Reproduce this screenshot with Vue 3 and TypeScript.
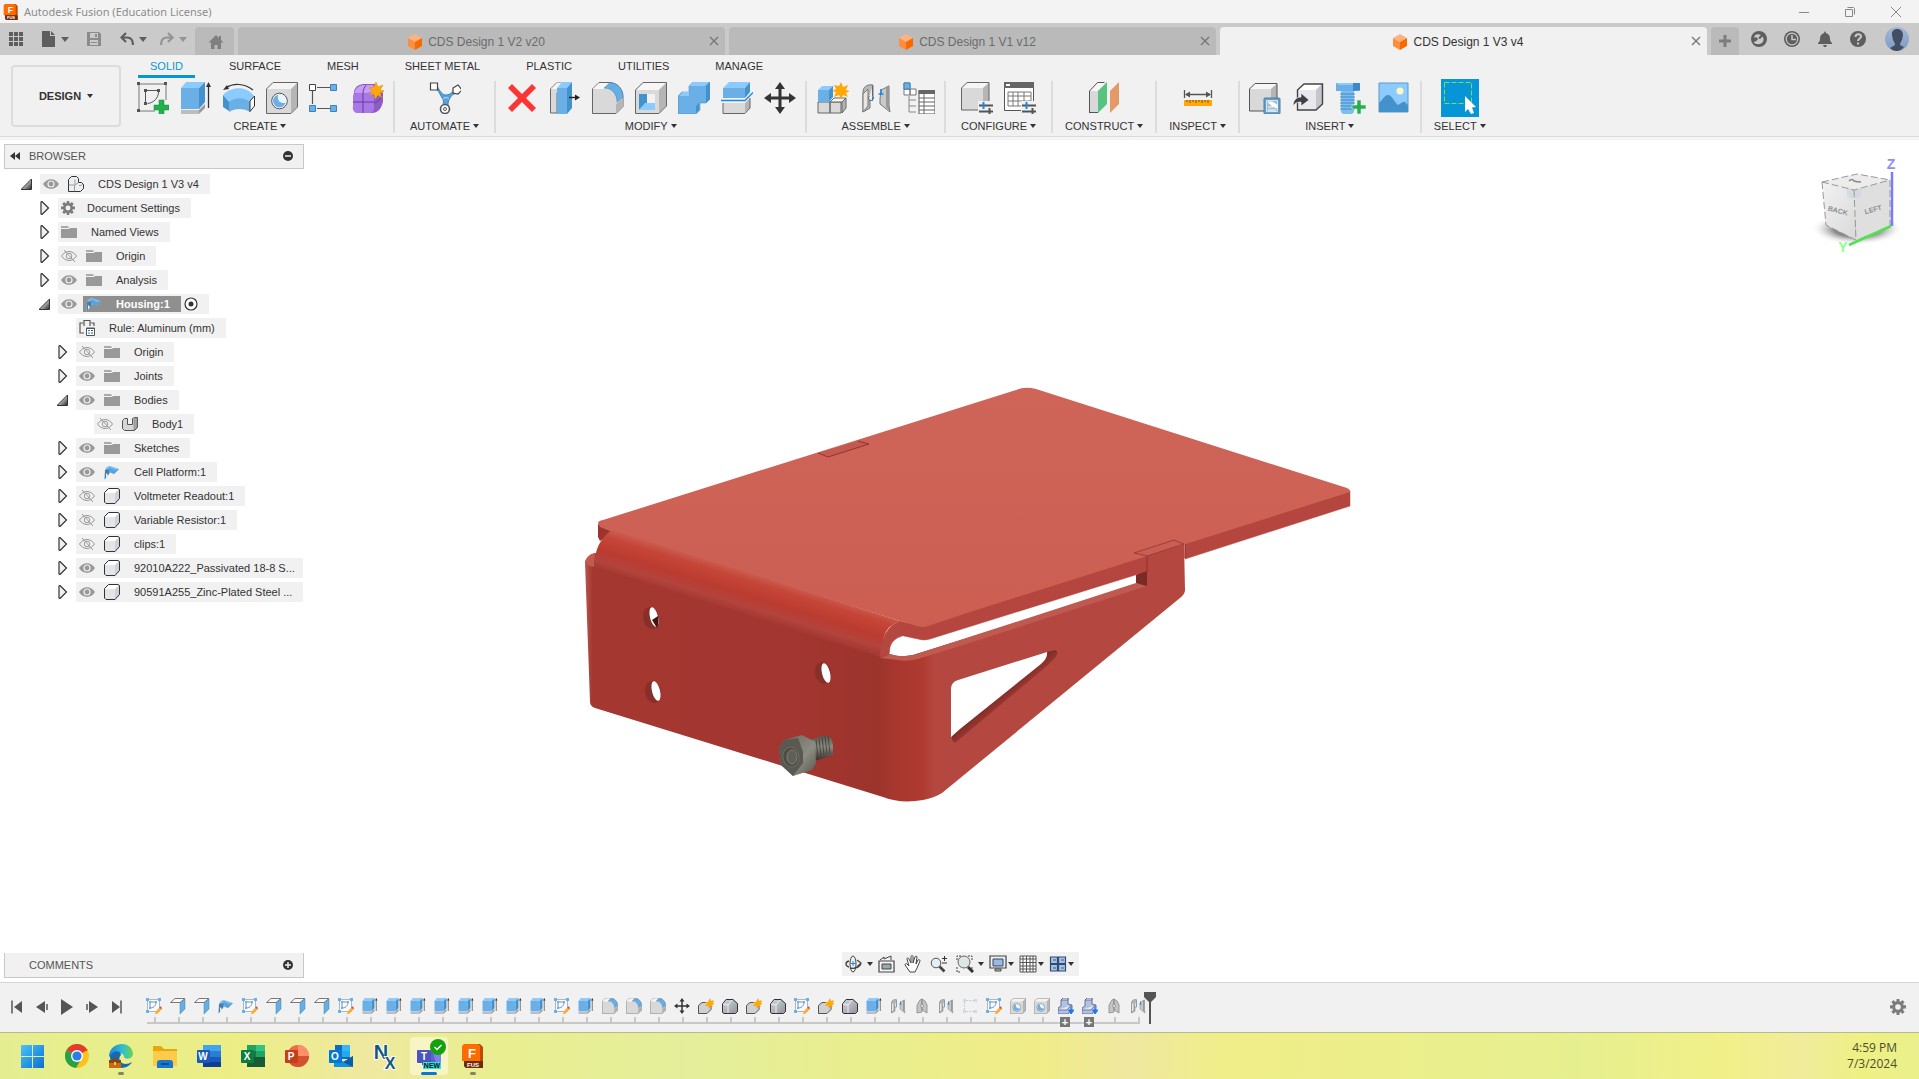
<script setup lang="ts">
import { ref } from 'vue'

interface DocTab { title: string; active: boolean }
interface ToolGroup { label: string; icons: string[]; selected?: boolean; roomy?: boolean }
interface TreeNode {
  label: string
  depth: number
  toggle: 'open' | 'closed' | 'none'
  eye?: 'on' | 'off'
  icon: string
  active?: boolean
}
interface NavTool { name: string; icon: string; menu?: 'near' | 'far' }
interface Glyph { text: string; x: number; y: number; size: number; kind?: string }
interface TaskApp { name: string; running?: boolean; glyphs: Glyph[] }

const docTabs: DocTab[] = [
  { title: 'CDS Design 1 V2 v20', active: false },
  { title: 'CDS Design 1 V1 v12', active: false },
  { title: 'CDS Design 1 V3 v4', active: true },
]

const workspaces = ['SOLID', 'SURFACE', 'MESH', 'SHEET METAL', 'PLASTIC', 'UTILITIES', 'MANAGE']
const activeWorkspace = ref('SOLID')

const groups: ToolGroup[] = [
  { label: 'CREATE', icons: ['sketch', 'extrude', 'revolve', 'hole', 'pattern', 'form'] },
  { label: 'AUTOMATE', icons: ['automate'], roomy: true },
  { label: 'MODIFY', icons: ['delete', 'presspull', 'fillet', 'shell', 'combine', 'split', 'move'] },
  { label: 'ASSEMBLE', icons: ['newcomp', 'joint', 'bom'] },
  { label: 'CONFIGURE', icons: ['config', 'configtable'], roomy: true },
  { label: 'CONSTRUCT', icons: ['plane'] },
  { label: 'INSPECT', icons: ['measure'] },
  { label: 'INSERT', icons: ['derive', 'insertcomp', 'fastener', 'decal'] },
  { label: 'SELECT', icons: ['select'], selected: true },
]

const tree: TreeNode[] = [
  { label: 'CDS Design 1 V3 v4', depth: 0, toggle: 'open', eye: 'on', icon: 'assembly' },
  { label: 'Document Settings', depth: 1, toggle: 'closed', icon: 'gear' },
  { label: 'Named Views', depth: 1, toggle: 'closed', icon: 'folder' },
  { label: 'Origin', depth: 1, toggle: 'closed', eye: 'off', icon: 'folder' },
  { label: 'Analysis', depth: 1, toggle: 'closed', eye: 'on', icon: 'folder' },
  { label: 'Housing:1', depth: 1, toggle: 'open', eye: 'on', icon: 'sheet', active: true },
  { label: 'Rule: Aluminum (mm)', depth: 2, toggle: 'none', icon: 'rule' },
  { label: 'Origin', depth: 2, toggle: 'closed', eye: 'off', icon: 'folder' },
  { label: 'Joints', depth: 2, toggle: 'closed', eye: 'on', icon: 'folder' },
  { label: 'Bodies', depth: 2, toggle: 'open', eye: 'on', icon: 'folder' },
  { label: 'Body1', depth: 3, toggle: 'none', eye: 'off', icon: 'body' },
  { label: 'Sketches', depth: 2, toggle: 'closed', eye: 'on', icon: 'folder' },
  { label: 'Cell Platform:1', depth: 2, toggle: 'closed', eye: 'on', icon: 'sheet' },
  { label: 'Voltmeter Readout:1', depth: 2, toggle: 'closed', eye: 'off', icon: 'component' },
  { label: 'Variable Resistor:1', depth: 2, toggle: 'closed', eye: 'off', icon: 'component' },
  { label: 'clips:1', depth: 2, toggle: 'closed', eye: 'off', icon: 'component' },
  { label: '92010A222_Passivated 18-8 S...', depth: 2, toggle: 'closed', eye: 'on', icon: 'component' },
  { label: '90591A255_Zinc-Plated Steel ...', depth: 2, toggle: 'closed', eye: 'on', icon: 'component' },
]

const navTools: NavTool[] = [
  { name: 'Orbit', icon: 'orbit', menu: 'far' },
  { name: 'Look At', icon: 'lookat' },
  { name: 'Pan', icon: 'hand' },
  { name: 'Zoom', icon: 'zoom' },
  { name: 'Fit', icon: 'fit', menu: 'far' },
  { name: 'Display Settings', icon: 'display', menu: 'near' },
  { name: 'Grid and Snaps', icon: 'grid', menu: 'near' },
  { name: 'Viewports', icon: 'viewports', menu: 'near' },
]

const playback = ['first', 'prev', 'play', 'next', 'last']

const repeat = (name: string, count: number): string[] => Array.from({ length: count }, () => name)
const features: string[] = [
  'tsketch', 'tflange', 'tflange', 'sheet', 'tsketch', ...repeat('tflange', 3), 'tsketch',
  ...repeat('extrude', 8), 'tsketch', 'extrude', ...repeat('fillet', 3), 'move',
  'tcomp', 'tbase', 'tcomp', 'tbase', 'tsketch', 'tcomp', 'tbase', 'extrude',
  'joint', 'trigid', 'joint', 'tpattern', 'tsketch', 'hole', 'hole', 'tinsert', 'tinsert', 'trigid', 'joint',
]

const letter = (text: string): Glyph[] => [{ text, x: 6, y: 16, size: 10 }]
const taskApps: TaskApp[] = [
  { name: 'windows', glyphs: [] },
  { name: 'chrome', glyphs: [] },
  { name: 'edge', running: true, glyphs: [] },
  { name: 'explorer', glyphs: [] },
  { name: 'word', glyphs: letter('W') },
  { name: 'excel', glyphs: letter('X') },
  { name: 'powerpoint', glyphs: letter('P') },
  { name: 'outlook', glyphs: letter('O') },
  { name: 'nx', glyphs: [{ text: 'N', x: 8, y: 15, size: 20, kind: 'nx' }, { text: 'X', x: 17, y: 25, size: 16, kind: 'nx' }] },
  { name: 'teams', running: true, glyphs: [{ text: 'T', x: 7, y: 16, size: 10 }, { text: 'NEW', x: 15, y: 24, size: 7, kind: 'dark' }] },
  { name: 'fusion', running: true, glyphs: [{ text: 'F', x: 11, y: 14, size: 13 }, { text: 'FUS', x: 12, y: 23, size: 6 }] },
]
</script>

<template>
  <div class="app">
    <svg class="defs" aria-hidden="true">
      <defs>
        <linearGradient id="g-tri" x1="0" y1="0" x2="1" y2="1"><stop offset="0.3" stop-color="#eee" /><stop offset="1" stop-color="#222" /></linearGradient>
        <linearGradient id="g-dark" x1="0" y1="0" x2="1" y2="1"><stop offset="0" stop-color="#d4d8e0" /><stop offset="1" stop-color="#8f929b" /></linearGradient>
        <linearGradient id="g-edge" x1="0" y1="0" x2="1" y2="0"><stop offset="0" stop-color="#1c86d8" /><stop offset="0.6" stop-color="#35c1c9" /><stop offset="1" stop-color="#6bd34b" /></linearGradient>
        <linearGradient id="g-win" x1="0" y1="0" x2="1" y2="1"><stop offset="0" stop-color="#4cc3fb" /><stop offset="1" stop-color="#0a6fd0" /></linearGradient>
        <linearGradient id="g-avatar" x1="0" y1="0" x2="0" y2="1"><stop offset="0" stop-color="#a3b7d3" /><stop offset="1" stop-color="#7f9cc6" /></linearGradient>
      </defs>

      <!-- ribbon tools -->
      <symbol id="i-sketch" viewBox="0 0 32 32">
        <path d="M3 2h25M2 3v25M3 29h15M29 3v15" stroke="#777" fill="none" />
        <path d="M0 0h3v3H0zM27 0h3v3h-3zM0 27h3v3H0zM7 7h3v3H7zM20 7h3v3h-3zM7 20h3v3H7z" fill="#555" />
        <path d="M10 8.500h10M8.500 10v10M21.500 10c0 6-5 11-11 11.500" stroke="#555" fill="none" />
        <path d="M22 18h5v5h5v5h-5v5h-5v-5h-5v-5h5z" fill="#22b14c" stroke="#178a38" stroke-width=".5" />
      </symbol>
      <symbol id="i-extrude" viewBox="0 0 32 32">
        <path d="M1 28h18v4H1z" fill="#bdbdbd" /><path d="M19 28l6-6v4l-6 6z" fill="#999" />
        <path d="M1 6h18v21H1z" fill="#6ab0e6" /><path d="M1 6l5-6h19l-6 6z" fill="#8ccbff" /><path d="M19 6l6-6v20l-6 7z" fill="#4492cc" />
        <path d="M28.500 26V3" stroke="#333" stroke-width="1.300" /><path d="M28.500 0l2.500 5h-5z" fill="#333" />
      </symbol>
      <symbol id="i-revolve" viewBox="0 0 32 32">
        <path d="M0 13c9-9 24-9 31 1l-4 6c-6-4-15-4-21 1z" fill="#8ccbff" />
        <path d="M0 13l6 7v9l-6-4z" fill="#4492cc" /><path d="M6 20c6-5 15-5 21 0v10c-6-4-15-4-21 0z" fill="#6ab0e6" />
        <path d="M27 19l4.500-5v10L27 29.500z" fill="#fff" stroke="#333" />
        <path d="M3 6c7-5 18-5 27 2" fill="none" stroke="#333" stroke-width="1.200" /><path d="M0 8l4-5 2 4z" fill="#333" />
      </symbol>
      <symbol id="i-hole" viewBox="0 0 32 32">
        <path d="M1 7l6-6h24l-6 6z" fill="#f4f4f4" /><path d="M25 7l6-6v24l-6 6z" fill="#b5b5b5" /><path d="M1 7h24v24H1z" fill="#d9d9d9" />
        <path d="M.500 7L7 .500h24.500V25L25 31.500H.500z" fill="none" stroke="#666" />
        <circle cx="13.500" cy="19" r="7.800" fill="#fff" stroke="#555" />
        <circle cx="13.500" cy="19" r="6.500" fill="#6ab0e6" /><path d="M12 12.700c-1 6 2 9 8 8.300a6.500 6.500 0 0 0-8-8.300z" fill="#e9f4fd" />
      </symbol>
      <symbol id="i-pattern" viewBox="0 0 32 32">
        <path d="M8 5.500h14M3.500 9v13M8 26.500h14" stroke="#555" stroke-width="1.200" />
        <path d="M.500 2.500h6v6h-6z" fill="#fff" stroke="#444" />
        <path d="M21.500 2.500h6v6h-6zM.500 23.500h6v6h-6zM21.500 23.500h6v6h-6z" fill="#6ab0e6" stroke="#3a84bd" />
      </symbol>
      <symbol id="i-form" viewBox="0 0 32 32">
        <path d="M2 9c2-5 5-7 11-7h10l8 9v9c-2 7-5 11-11 11H7c-4 0-7-3-6-7z" fill="#8f5cc6" />
        <path d="M2 11c2-6 6-8 11-8h8l3 7c-4 1-16 1-22 1z" fill="#c99cf5" />
        <path d="M1 15c0-3 2-4 5-4h11c3 0 5 2 5 5v10c0 3-2 5-5 5H6c-3 0-5-2-5-5z" fill="#a878e6" />
        <path d="M11 11v20M1 20h21M22 21c4-1 7-4 8-8M14 3c-1 2-3 4-3 8" stroke="#6a3ca0" fill="none" />
        <path d="M24 0l2 5 5-2-3 5 5 1-5 2 2 5-4-3-3 4-1-5-5 1 4-4-4-3 5-1z" fill="#ffa808" stroke="#e08d00" stroke-width=".5" />
      </symbol>
      <symbol id="i-automate" viewBox="0 0 32 32">
        <path d="M5 5c6 4 6 9 9 12 1 3 0 5 0 7h5c0-3 0-5 2-8 2-4 5-4 8-6l-3-4c-3 6-6 7-10 7-4-1-6-6-8-9z" fill="#5aa3da" stroke="#3a84bd" />
        <path d="M14 17c2-2 4-2 6 0" stroke="#cfe8fa" fill="none" />
        <path d="M1.500 1h7v7h-7z" fill="#fff" stroke="#444" stroke-width="1.200" />
        <path d="M24 6l5-3 4 5-4 4-5-1z" fill="#fff" stroke="#444" stroke-width="1.200" />
        <circle cx="16" cy="27" r="4.500" fill="#fff" stroke="#555" stroke-width="1.600" /><circle cx="16" cy="27" r="1.500" fill="none" stroke="#555" />
      </symbol>
      <symbol id="i-delete" viewBox="0 0 32 32">
        <path d="M6 2l10 10L26 2l4 4-10 10 10 10-4 4-10-10L6 30l-4-4 10-10L2 6z" fill="#fb3535" />
      </symbol>
      <symbol id="i-presspull" viewBox="0 0 32 32">
        <path d="M1.500 7l6-6h5v4L8 11v20H1.500z" fill="#d9d9d9" stroke="#666" /><path d="M2 7l6-6h5L8 7z" fill="#f5f5f5" />
        <path d="M8 6h10v26H8z" fill="#6ab0e6" /><path d="M8 6l5-6h10l-5 6z" fill="#8ccbff" /><path d="M18 6l5-6v26l-5 6z" fill="#4492cc" />
        <path d="M20 15.500h7" stroke="#222" stroke-width="1.400" /><path d="M26 12.500l5 3-5 3z" fill="#222" />
      </symbol>
      <symbol id="i-fillet" viewBox="0 0 32 32">
        <path d="M.500 31.500V7L7 .500h10c8 0 14 6 14 15v9l-7 7z" fill="#d9d9d9" stroke="#666" />
        <path d="M1 7l6-6h9l-4 6z" fill="#f6f6f6" /><path d="M24 22l7-6v9l-7 6z" fill="#b5b5b5" />
        <path d="M12 6l6-5c8 0 13 6 13 14l-6 5c0-8-5-14-13-14z" fill="#67aee4" stroke="#3a84bd" stroke-width=".5" />
      </symbol>
      <symbol id="i-shell" viewBox="0 0 32 32">
        <path d="M.500 31.500V8L8 .500h23.500V24L24 31.500z" fill="#d9d9d9" /><path d="M1 8l7-7h23l-7 7z" fill="#f6f6f6" /><path d="M24 8l7-7v23l-7 7z" fill="#b5b5b5" />
        <path d="M.500 31.500V8L8 .500h23.500V24L24 31.500z" fill="none" stroke="#666" />
        <path d="M4 12h16v16H4z" fill="#fff" /><path d="M4 12h8v9l-8 7z" fill="#4492cc" /><path d="M4 28l6-7h10v7z" fill="#8ccbff" /><path d="M12 12h8v9h-8z" fill="#f2f2f2" />
      </symbol>
      <symbol id="i-combine" viewBox="0 0 32 32">
        <path d="M0 14l4-4h7V4l4-4h17v17l-4 4h-6v7l-4 4H0z" fill="#6ab0e6" stroke="#3a84bd" stroke-width=".5" />
        <path d="M1 14l4-4h6v4zM11 4l4-4h16l-4 4z" fill="#8ccbff" /><path d="M28 4l4-4v17l-4 4zM18 24l3-3v7l-3 3z" fill="#4492cc" />
      </symbol>
      <symbol id="i-split" viewBox="0 0 32 32">
        <path d="M2 6h22v10H2z" fill="#6ab0e6" /><path d="M2 6l6-6h21l-5 6z" fill="#8ccbff" /><path d="M24 6l5-6v10l-5 6z" fill="#4492cc" />
        <path d="M0 18.500h24l8-8" stroke="#1e88e5" fill="none" stroke-width="1.300" />
        <path d="M2 21h22v10H2z" fill="#d9d9d9" /><path d="M24 21l5-5v10l-5 5z" fill="#b5b5b5" /><path d="M2 21v10.500h22l5-5.500V16" fill="none" stroke="#666" />
      </symbol>
      <symbol id="i-move" viewBox="0 0 32 32">
        <path d="M16 0l5 7h-3.500v7.500H25V11l7 5-7 5v-3.500h-7.500V25H21l-5 7-5-7h3.500v-7.500H7V21l-7-5 7-5v3.500h7.500V7H11z" fill="#333" />
      </symbol>
      <symbol id="i-newcomp" viewBox="0 0 32 32">
        <path d="M1 20h12v11H1zM13 20h11v11H13z" fill="#d9d9d9" stroke="#666" /><path d="M13 20l4-4h12l-4 4z" fill="#f4f4f4" stroke="#666" /><path d="M25 20l4-4v10l-4 5z" fill="#b5b5b5" stroke="#666" />
        <path d="M1 8h11v12H1z" fill="#6ab0e6" /><path d="M1 8l4-4h12l-5 4z" fill="#8ccbff" /><path d="M12 8l4-4v11l-4 5z" fill="#4492cc" />
        <path d="M24 0l2 5 5-2-2 5 4 1-4 2 2 4-5-2-2 4-2-4-5 2 2-5-4-1 4-2-2-4 5 1z" fill="#ffa808" />
      </symbol>
      <symbol id="i-joint" viewBox="0 0 32 32">
        <path d="M3 10c0-5 4-8 10-7v13l-3 1v9l-7 4z" fill="#b9b9b9" stroke="#777" /><path d="M3 12l5-5v17l-5 6z" fill="#e6e6e6" stroke="#777" />
        <path d="M9.500 14a2.500 2.500 0 1 0 3 0V4" fill="#eee" stroke="#666" />
        <path d="M20 17l1-9 8-4v20l1 6-10-8z" fill="#c9c9c9" stroke="#777" /><path d="M26 5l3-2v25l-3-3z" fill="#999" />
        <path d="M12.500 15v4" stroke="#1e88e5" /><path d="M21 7v6M18.500 12h5" stroke="#1e88e5" stroke-width="1.600" />
      </symbol>
      <symbol id="i-bom" viewBox="0 0 32 32">
        <path d="M1 1h6v6H1zM1 7h6v6H1zM7 7h6v6H7z" fill="#fff" stroke="#777" /><path d="M1 1h6v6H1z" fill="#6ab0e6" stroke="#3a84bd" />
        <path d="M6 14v16M6 18h7M6 24h7M6 30h7" stroke="#888" fill="none" />
        <path d="M16 9h16v23H16z" fill="#fff" stroke="#555" /><path d="M15.500 8h17v4h-17z" fill="#666" />
        <path d="M16 16h16M16 20h16M16 24h16M16 28h16M21 12v20" stroke="#666" />
      </symbol>
      <symbol id="i-config" viewBox="0 0 32 32">
        <path d="M.500 28V6L6 .500h22V22l-6 6z" fill="#d9d9d9" /><path d="M1 6l5-5h21l-5 5z" fill="#f6f6f6" /><path d="M22 6l6-5v21l-6 6z" fill="#b5b5b5" />
        <path d="M.500 28V6L6 .500h22V22l-6 6z" fill="none" stroke="#666" />
        <path d="M17 19h16v13H17z" fill="#f1f1f1" />
        <path d="M18 23.500h14M18 29.500h14" stroke="#555" stroke-width="1.800" /><path d="M22.500 20v7" stroke="#1e88e5" stroke-width="2" /><path d="M28.500 26v6" stroke="#555" stroke-width="2" />
      </symbol>
      <symbol id="i-configtable" viewBox="0 0 32 32">
        <path d="M.500.500h29v28H.500z" fill="#fff" stroke="#555" /><path d="M0 0h30v6H0z" fill="#666" /><path d="M2 2h4v2H2z" fill="#fff" />
        <path d="M4 10h23v14H4zM4 14h23M4 19h23M9 10v14M14 10v14M20 10v14" stroke="#777" fill="none" />
        <path d="M17 19h16v13H17z" fill="#f1f1f1" />
        <path d="M18 23.500h14M18 29.500h14" stroke="#555" stroke-width="1.800" /><path d="M22.500 20v7" stroke="#1e88e5" stroke-width="2" /><path d="M28.500 26v6" stroke="#555" stroke-width="2" />
      </symbol>
      <symbol id="i-plane" viewBox="0 0 32 32">
        <path d="M2 31V9l8-8h8l-8 8v22z" fill="#d9d9d9" /><path d="M2 9l8-8h8l-8 8z" fill="#f6f6f6" /><path d="M1.500 31V9l8-8.500h7M1.500 30.500H10" fill="none" stroke="#555" />
        <path d="M10 9l9-9v22l-9 9z" fill="#58c381" /><path d="M22 9l9-9v22l-9 9z" fill="#e39a66" />
      </symbol>
      <symbol id="i-measure" viewBox="0 0 32 32">
        <path d="M2.500 8v8M29.500 8v8M4 12.500h24" stroke="#555" stroke-width="1.300" /><path d="M3 12.500l5-3v6zM29 12.500l-5-3v6z" fill="#555" />
        <path d="M2 18h28v6H2z" fill="#ffa808" /><path d="M5 18v2M8 18v3M11 18v2M14 18v3M17 18v2M20 18v3M23 18v2M26 18v3" stroke="#775010" />
      </symbol>
      <symbol id="i-derive" viewBox="0 0 32 32">
        <path d="M.500 29V7L6 1.500h22V22l-6 7z" fill="#d9d9d9" /><path d="M1 7l5-5h21l-5 5z" fill="#f6f6f6" /><path d="M22 7l6-5v20l-6 7z" fill="#b5b5b5" />
        <path d="M.500 29V7L6 1.500h22V22l-6 7z" fill="none" stroke="#555" />
        <rect x="15" y="16" width="16" height="16" rx="1" fill="#6f9fc0" stroke="#4a7fa5" /><path d="M17.500 18.500h11v11h-11z" fill="#9cc0d8" stroke="#d5e5ef" />
        <path d="M19 20h4l5 3v3l-5-2zM19 25h5M19 28h8" stroke="#fff" fill="#fff" />
      </symbol>
      <symbol id="i-insertcomp" viewBox="0 0 32 32">
        <path d="M6 28V8l6-6h18v20l-6 6z" fill="#e8e8ee" /><path d="M6 8l6-6h18l-6 6z" fill="#fff" /><path d="M24 8l6-6v20l-6 6z" fill="#c5c5cb" />
        <path d="M5.500 28V8l6.500-6h18.500v20l-6.500 6z" fill="none" stroke="#444" stroke-width="1.400" />
        <path d="M1 24c0-6 4-9 8-9v-4l8 7-8 6v-4c-4 0-6 1-8 4z" fill="#3f4047" stroke="#f1f1f1" stroke-width=".7" />
      </symbol>
      <symbol id="i-fastener" viewBox="0 0 32 32">
        <path d="M1 1h24v8H1z" fill="#6ab0e6" /><path d="M18 1h7v7l-7 1z" fill="#3a8acb" /><path d="M1 1l3 2h14V1z" fill="#8ccbff" />
        <path d="M6 9h13v21l-2 2H8l-2-2z" fill="#7fbdeb" /><path d="M5 12h15M5 15h15M5 18h15M5 21h15M5 24h15M5 27h15" stroke="#3a8acb" stroke-width="1.200" />
        <path d="M22 18h4v5h5v4h-5v5h-4v-5h-5v-4h5z" fill="#22b14c" stroke="#f1f1f1" stroke-width=".6" />
      </symbol>
      <symbol id="i-decal" viewBox="0 0 32 32">
        <path d="M1 1h29v29H1z" fill="#8ccbff" stroke="#5d9ac6" /><circle cx="22" cy="9" r="3.500" fill="#fff7c2" />
        <path d="M1 21c5-5 6-8 9-8 4 0 7 8 10 10 3-1 4-4 7-3l3 3v7H1z" fill="#4492cc" />
      </symbol>
      <symbol id="i-select" viewBox="0 0 38 38">
        <path d="M3.500 3.500h27v21h-27z" fill="none" stroke="#6fe06a" stroke-dasharray="5 2" />
        <path d="M24 17l11 11-4 .5 2 5.500-3 1-3-5-3 3z" fill="#fff" />
      </symbol>

      <!-- tree icons -->
      <symbol id="i-eye-on" viewBox="0 0 16 16"><path d="M0 8c4-6.500 12-6.500 16 0-4 6.500-12 6.500-16 0z" fill="#999" /><circle cx="8" cy="8" r="3.600" fill="#f1f1f1" /><circle cx="8" cy="8" r="2.400" fill="#999" /></symbol>
      <symbol id="i-eye-off" viewBox="0 0 16 16"><path d="M.500 8c4-6 11-6 15 0-4 6-11 6-15 0zM3 2l11 12" fill="none" stroke="#999" /><circle cx="8" cy="8" r="2.800" fill="none" stroke="#999" /></symbol>
      <symbol id="i-folder" viewBox="0 0 16 16"><path d="M0 2h7l1 2H0z" fill="#aaa" /><path d="M0 5h8l1-1h7v10H0z" fill="#999" /></symbol>
      <symbol id="i-gear" viewBox="0 0 16 16"><path fill-rule="evenodd" d="M6.500 0h3v2.200l1.300.5 1.600-1.600 2.200 2.200L13 4.900l.6 1.400H16v3.200h-2.400L13 11l1.600 1.700-2.200 2.200-1.600-1.600-1.300.5V16h-3v-2.200l-1.400-.5-1.600 1.600-2.200-2.200L3 11l-.6-1.500H0V6.300h2.400L3 4.900 1.300 3.300l2.200-2.200 1.600 1.600 1.400-.5zM8 5.200a2.800 2.800 0 1 0 0 5.600 2.800 2.800 0 0 0 0-5.600z" fill="#7c7c7c" /></symbol>
      <symbol id="i-assembly" viewBox="0 0 16 16"><path d="M.500 15.500V3.500l3-3h5l2 2v4h3l2 2v4l-3 3z" fill="#eceff4" stroke="#333" /><path d="M6.500 15.500V9.500l4-3M.500 9h6M7 3.500v5M11 9.500h2l2-1.500" fill="none" stroke="#777" stroke-width=".7" /></symbol>
      <symbol id="i-sheet" viewBox="0 0 16 16"><path d="M1 6c1-3 3-4 5-4l9 3-5 5c-3-3-6 0-8 3l-2 3z" fill="#7cbdf0" /><path d="M5 3l6 3 4-1-5 5-3-1z" fill="#5aa3da" /><path d="M1 6v9l4-5c1-2 0-4 1-5z" fill="#4a7ea8" /><path d="M2 9v5l2-3z" fill="#eee" /></symbol>
      <symbol id="i-rule" viewBox="0 0 16 16"><path d="M4 3H1v10h4M5 6V.500h6V6M12 3h3v3" fill="none" stroke="#555" stroke-width="1.200" /><path d="M7.500 8h8v7.500h-8z" fill="#fff" stroke="#555" /><path d="M9 10.500h2M9 13h2" stroke="#1e88e5" /><path d="M12 10.500h2M12 13h2M7 8.500h9" stroke="#555" /></symbol>
      <symbol id="i-body" viewBox="0 0 16 16"><path d="M.500 4.500l2-2h3v6h5v-6l2-1h3v10l-3 3h-10l-2-2z" fill="#d6d6d6" stroke="#555" /><path d="M12 3l3-1v9l-3 3z" fill="#a8a8a8" stroke="#777" stroke-width=".6" /></symbol>
      <symbol id="i-component" viewBox="0 0 16 16"><path d="M1 5l4-4h10v10l-4 4H1z" fill="#e3e5ea" /><path d="M1 5l4-4h10l-4 4z" fill="#fff" /><path d="M11 5l4-4v10l-4 4z" fill="#cfd2da" /><path d="M.500 14V4.500l4-4h9.500l1.500 1v9l-4.500 5H2z" fill="none" stroke="#333" /></symbol>
      <symbol id="i-open" viewBox="0 0 12 14"><path d="M0 12.500L10.500 2v10.500z" fill="url(#g-tri)" stroke="#333" /></symbol>
      <symbol id="i-closed" viewBox="0 0 12 14"><path d="M2 1l1-.500 6.500 6.500L3 13.500 2 13z" fill="#eef0f2" stroke="#333" stroke-width="1.200" /></symbol>

      <!-- timeline icons -->
      <symbol id="i-tsketch" viewBox="0 0 16 16"><path d="M1.500 1.500h12v12h-12z" fill="#f7f9fb" stroke="#999" stroke-width=".7" /><path d="M4 4h6c0 4-3 6-6 6z" fill="none" stroke="#4a7ea8" stroke-width=".8" /><path d="M0 0h3v3H0zM12 0h3v3h-3zM0 12h3v3H0zM3 3h2v2H3zM9 3h2v2H9zM3 9h2v2H3z" fill="#6ab0e6" /><path d="M9 16l1-3 4-4 2 2-5 5z" fill="#f4b13c" /><path d="M13 10l2-2 1 3z" fill="#e0493c" /></symbol>
      <symbol id="i-tflange" viewBox="0 0 16 16"><path d="M.500 4.500L5 .500h10l-5 4z" fill="#fafafa" stroke="#777" /><path d="M10 5l5-4v10l-5 5z" fill="#67aee4" stroke="#3a84bd" stroke-width=".5" /></symbol>
      <symbol id="i-tcomp" viewBox="0 0 16 16"><path d="M.500 15.500v-8L4 4.500h9v7l-4 4z" fill="#d0d0d0" stroke="#555" /><path d="M12 0l1 3 3-1-1 3 2 1-3 1 1 2-3-1-1 3-1-3-3 0 2-2-2-2 3 0z" fill="#ffa808" /></symbol>
      <symbol id="i-tbase" viewBox="0 0 16 16"><path d="M.500 14.500V6L4 1.500h7l4.500 4v8l-2 2H2z" fill="url(#g-dark)" stroke="#333" /><path d="M6 15V7l4-5M1 6l5 1" fill="none" stroke="#f1f1f1" /></symbol>
      <symbol id="i-trigid" viewBox="0 0 16 16"><path d="M3 15V7l3-5 2-1v13zM8 1l3 2 2 4v8l-5-3z" fill="#c5c5c5" stroke="#888" stroke-width=".8" /><circle cx="8" cy="8" r="1.500" fill="#eee" stroke="#777" stroke-width=".6" /></symbol>
      <symbol id="i-tpattern" viewBox="0 0 16 16"><g opacity=".3"><path d="M2.500 4v8M4 2.500h8M4 13.500h8" stroke="#777" stroke-dasharray="2 1" /><path d="M1 1h3v3H1zM12 1h3v3h-3zM1 12h3v3H1zM12 12h3v3h-3z" fill="#6ab0e6" /></g></symbol>
      <symbol id="i-tinsert" viewBox="0 0 16 16"><path d="M3 2l2-2h5v6l4 1v4l-4 5H0v-6l3-2z" fill="#b4c2e2" stroke="#4a5880" stroke-width=".8" /><path d="M3 2l2-2h5v2zM0 12h9l4-5" fill="#dfe6f5" stroke="#4a5880" stroke-width=".7" /><path d="M13 8v5M10.500 12l2.500 4 3-4z" fill="#1e78e5" stroke="#1e78e5" /></symbol>
      <symbol id="i-first" viewBox="0 0 16 16"><path d="M3 1.500v13" stroke="#555" stroke-width="1.500" /><path d="M13 2v12L5 8z" fill="#555" /></symbol>
      <symbol id="i-prev" viewBox="0 0 16 16"><path d="M11 2v12L2 8z" fill="#555" /><path d="M13 5v6" stroke="#555" stroke-width="1.500" /></symbol>
      <symbol id="i-play" viewBox="0 0 16 16"><path d="M2 0v16l12-8z" fill="#555" /></symbol>
      <symbol id="i-next" viewBox="0 0 16 16"><path d="M5 2v12l9-6z" fill="#555" /><path d="M3 5v6" stroke="#555" stroke-width="1.500" /></symbol>
      <symbol id="i-last" viewBox="0 0 16 16"><path d="M3 2v12l8-6z" fill="#555" /><path d="M12 1.500v13" stroke="#555" stroke-width="1.500" /></symbol>

      <!-- navigation bar icons -->
      <symbol id="i-orbit" viewBox="0 0 18 18"><ellipse cx="8" cy="9" rx="3" ry="8" fill="none" stroke="#444" /><path d="M4 6C0 7 0 11 4 12M12 5l4 3-4 4M5 13c4 1 8 0 11-4" fill="none" stroke="#444" stroke-width="1.300" /><path d="M8 6v5M5.500 8.500h5" stroke="#1e88e5" /></symbol>
      <symbol id="i-lookat" viewBox="0 0 18 18"><path d="M1 6h15v11H1z" fill="#f5f5f5" stroke="#444" stroke-width="1.200" /><path d="M4 9h9v5H4z" fill="#9aa" stroke="#444" /><path d="M2 5l4-3v2l7-3v4" fill="none" stroke="#444" /></symbol>
      <symbol id="i-hand" viewBox="0 0 18 18"><path d="M6 17L1 10c0-1 1-2 2-1l2 2L3 4c0-1 1-2 2 0l2 4V2c0-2 2-2 2 0v6l2-6c0-1 2-1 2 0l-1 7 2-4c1-1 2 0 2 1l-3 7-2 4z" fill="#fff" stroke="#444" /></symbol>
      <symbol id="i-zoom" viewBox="0 0 18 18"><circle cx="6" cy="8" r="4.800" fill="#e5edf5" stroke="#555" /><path d="M9.500 11.500l5 5" stroke="#444" stroke-width="2.600" /><path d="M12 3.500h5M14.500 1v5M12 8h5" stroke="#333" /></symbol>
      <symbol id="i-fit" viewBox="0 0 18 18"><path d="M1 5V1h4M12 1h4v4M1 12v5h4M16 12v5" fill="none" stroke="#444" stroke-dasharray="2 1" /><circle cx="8" cy="7" r="6" fill="#dde6e6" stroke="#666" /><path d="M12 12l5 5" stroke="#333" stroke-width="3" /></symbol>
      <symbol id="i-display" viewBox="0 0 18 18"><path d="M1 1h16v12H1z" fill="#eee" stroke="#444" stroke-width="1.200" /><path d="M4 4h10v7H4z" fill="#9ab9dd" stroke="#2e4a75" /><path d="M6 14h6v2H6z" fill="#ccc" stroke="#444" /></symbol>
      <symbol id="i-grid" viewBox="0 0 18 18"><path d="M1 1h16v16H1zM1 4h16M1 7.500h16M1 11h16M1 14h16M4 1v16M7.500 1v16M11 1v16M14 1v16" fill="#fff" stroke="#555" /></symbol>
      <symbol id="i-viewports" viewBox="0 0 18 18"><path d="M1.500 2h7v6.500h-7zM9.500 2h7v6.500h-7zM1.500 9.500h7V16h-7zM9.500 9.500h7V16h-7z" fill="#a9c0e0" stroke="#2e4a75" stroke-width="1.200" /><path d="M4 5h3M12 5h3M4 13h3M12 13h3" stroke="#5a7fb0" stroke-width="1.500" /></symbol>

      <!-- quick access icons -->
      <symbol id="i-cube" viewBox="0 0 16 16"><path d="M8 0l7 4-7 4-7-4z" fill="#ffb27d" /><path d="M1 4l7 4v8l-7-4z" fill="#ff8d3f" /><path d="M15 4l-7 4v8l7-4z" fill="#f86a00" /></symbol>
      <symbol id="i-apps" viewBox="0 0 16 16"><path d="M1 1h4v4H1zM6 1h4v4H6zM11 1h4v4h-4zM1 6h4v4H1zM6 6h4v4H6zM11 6h4v4h-4zM1 11h4v4H1zM6 11h4v4H6zM11 11h4v4h-4z" fill="#5e5e5e" /></symbol>
      <symbol id="i-file" viewBox="0 0 16 16"><path d="M1 0h8v5h5v11H1z" fill="#5e5e5e" /><path d="M10 0l4 4h-4z" fill="#5e5e5e" /></symbol>
      <symbol id="i-save" viewBox="0 0 16 16"><path fill-rule="evenodd" d="M1 1h12l2 2v12H1zM4 2v5h8V2zM4 9v5h8V9z" fill="#8b8b8b" /><path d="M9 3h2v3H9zM5 11h6v1H5z" fill="#8b8b8b" /></symbol>
      <symbol id="i-undo" viewBox="0 0 16 16"><path d="M7 2L2.500 6.500 7 11M3 6.500h5c4 0 6 3 6 7.500" fill="none" stroke="#5e5e5e" stroke-width="2.200" /></symbol>
      <symbol id="i-redo" viewBox="0 0 16 16"><path d="M9 2l4.500 4.500L9 11M13 6.500H8c-4 0-6 3-6 7.500" fill="none" stroke="#949494" stroke-width="2.200" /></symbol>
      <symbol id="i-home" viewBox="0 0 16 16"><path d="M8 1l3 3V2h2v4l2.500 2.500H13V15H9.500v-4h-3v4H3V8.500H.500z" fill="#7f7f7f" /></symbol>
      <symbol id="i-close" viewBox="0 0 12 12"><path d="M2 2l8 8M10 2l-8 8" stroke="currentColor" stroke-width="1.400" /></symbol>
      <symbol id="i-jobs" viewBox="0 0 16 16"><circle cx="8" cy="8" r="8" fill="#5e5e5e" /><path d="M2.500 11c2 3 8 3 9.500-.5 1-2 .5-4-.5-5L9 8 7.500 6.500 10 4C6 2 3 4 3 7c1-1 3-1 4 1-1 2-3 3-4.500 3z" fill="#cacaca" /><path d="M8 7.500l5-5" stroke="#5e5e5e" stroke-width="1.500" /></symbol>
      <symbol id="i-clock" viewBox="0 0 16 16"><circle cx="8" cy="8" r="8" fill="#5e5e5e" /><circle cx="8" cy="8" r="5.800" fill="none" stroke="#cacaca" stroke-width="1.200" /><path d="M8 4v4.500h4" fill="none" stroke="#cacaca" stroke-width="1.500" /></symbol>
      <symbol id="i-bell" viewBox="0 0 16 16"><path d="M8 0l1 2c3 1 4 3 4 6 0 2 1 3 2 4v1H1v-1c1-1 2-2 2-4 0-3 1-5 4-6zM6 14h4l-1 2H7z" fill="#5e5e5e" /></symbol>
      <symbol id="i-help" viewBox="0 0 16 16"><circle cx="8" cy="8" r="8" fill="#5e5e5e" /><path d="M5.500 6c0-4 5.500-3.500 5.500-.500C11 7.500 8 7.500 8 10M8 11.500v2" fill="none" stroke="#cacaca" stroke-width="2" /></symbol>
      <symbol id="i-avatar" viewBox="0 0 24 24"><circle cx="12" cy="12" r="12" fill="url(#g-avatar)" /><path d="M7 8c-1-8 11-8 11 0l-1 5c-1 2-2 3-2 5l4 2c-4 5-10 5-14 1l5-3c0-2-1-3-2-5z" fill="#414e63" /></symbol>

      <!-- taskbar apps -->
      <symbol id="a-windows" viewBox="0 0 24 24"><path d="M0 1h11v11H0zM12 1h11v11H12zM0 13h11v11H0zM12 13h11v11H12z" fill="url(#g-win)" /></symbol>
      <symbol id="a-chrome" viewBox="0 0 24 24"><circle cx="12" cy="12" r="12" fill="#fcc31e" /><path d="M12 12L1.600 6a12 12 0 0 1 20.800 0z" fill="#e33b2e" /><path d="M12 12L1.600 6A12 12 0 0 0 11 24l5-9z" fill="#26a148" /><path d="M12 6h10.400" stroke="#e33b2e" /><circle cx="12" cy="12" r="6" fill="#fff" /><circle cx="12" cy="12" r="4.600" fill="#2b7de9" /></symbol>
      <symbol id="a-edge" viewBox="0 0 24 24"><path d="M0 12C1-3 23-4 24 10c0 5-8 6-9 3 1-5-10-6-13 1z" fill="url(#g-edge)" /><path d="M1 14C1 6 12 5 12 11c-3 3-2 8 4 9 3 0 5-1 7-2-3 7-19 10-22-4z" fill="#1769b8" /><path d="M0 16h12v8H0z" fill="#c86b12" /><path d="M0 16h12v3H0z" fill="#8a4708" /><path d="M4 14h4v2H4z" fill="none" stroke="#8a4708" /><path d="M5 18h2v3H5z" fill="#f4c069" /></symbol>
      <symbol id="a-explorer" viewBox="0 0 24 24"><path d="M0 2h8l3 3h13v17H0z" fill="#e8a80d" /><path d="M0 7h24v15H0z" fill="#fdcb4c" /><path d="M4 24v-5c0-2 1-3 3-3h10c2 0 3 1 3 3v5z" fill="#1579ce" /><path d="M8 19h8v2H8z" fill="#0a4f94" /></symbol>
      <symbol id="a-word" viewBox="0 0 24 24"><path d="M6 1h18v6H6z" fill="#41a5ee" /><path d="M6 7h18v6H6z" fill="#2b7cd3" /><path d="M6 13h18v5H6z" fill="#185abd" /><path d="M6 18h18v5H6z" fill="#103f91" /><rect y="6" width="13" height="13" rx="1" fill="#185abd" /></symbol>
      <symbol id="a-excel" viewBox="0 0 24 24"><path d="M6 1h18v6H6z" fill="#21a366" /><path d="M15 1h9v6h-9z" fill="#33c481" /><path d="M6 7h18v6H6z" fill="#107c41" /><path d="M6 13h18v10H6z" fill="#185c37" /><path d="M15 7h9v6h-9z" fill="#21a366" /><rect y="6" width="13" height="13" rx="1" fill="#107c41" /></symbol>
      <symbol id="a-powerpoint" viewBox="0 0 24 24"><circle cx="13" cy="12" r="11" fill="#ed6c47" /><path d="M13 1a11 11 0 0 1 11 11H13z" fill="#ff8f6b" /><path d="M2 12h22a11 11 0 0 1-22 0z" fill="#d35230" /><rect y="6" width="13" height="13" rx="1" fill="#c43e1c" /></symbol>
      <symbol id="a-outlook" viewBox="0 0 24 24"><path d="M6 1h15v14H6z" fill="#0f6cbd" /><path d="M13 1h8v6h-8z" fill="#35b8f1" /><path d="M13 7h8v6h-8z" fill="#28a8ea" /><path d="M5 12l10 6 9-6v11H5z" fill="#1490df" /><path d="M14 18l10-6v11z" fill="#0b5ca8" /><rect y="6" width="13" height="13" rx="1" fill="#0078d4" /></symbol>
      <symbol id="a-nx" viewBox="0 0 24 24"></symbol>
      <symbol id="a-teams" viewBox="0 0 24 24" overflow="visible"><path d="M5 7h17v14H5z" fill="#5b62c9" /><path d="M16 9h8v9l-4 4z" fill="#7b83eb" /><rect y="6" width="14" height="13" rx="1" fill="#4b53bc" /><circle cx="21" cy="3" r="8" fill="#13a10e" /><path d="M17.500 3l2.500 2.500L24.500 1" stroke="#fff" stroke-width="1.500" fill="none" /><path d="M6 18h18v7H6z" fill="#2ee0e6" /></symbol>
      <symbol id="a-fusion" viewBox="0 0 24 24"><path d="M3 2l2-2h14l3 3v21H5l-2-2z" fill="#c04a00" /><path d="M1 2l2-2h14l2 2v15H1z" fill="#ff6b00" /><path d="M3 17h19v7H5l-2-2z" fill="#6e2c0c" /></symbol>
    </svg>

    <header class="titlebar">
      <svg class="logo" viewBox="0 0 24 24"><use href="#a-fusion" /><text x="11" y="14" font-size="13">F</text><text x="12" y="23" font-size="6">FUS</text></svg>
      <span class="title">Autodesk Fusion (Education License)</span>
      <div class="window-controls">
        <button type="button" aria-label="Minimize"><svg width="12" height="12" viewBox="0 0 12 12"><path d="M1 6.500h10" stroke="#888" /></svg></button>
        <button type="button" aria-label="Restore"><svg width="12" height="12" viewBox="0 0 12 12"><path d="M1.500 3.500h7v7h-7zM3.500 1.500h6l1 1v6" fill="none" stroke="#888" /></svg></button>
        <button type="button" aria-label="Close"><svg width="12" height="12" viewBox="0 0 12 12"><path d="M1 1l10 10M11 1L1 11" stroke="#888" /></svg></button>
      </div>
    </header>

    <nav class="docbar">
      <div class="quick">
        <button type="button" aria-label="Show data panel"><svg class="i16"><use href="#i-apps" /></svg></button>
        <button type="button" class="q-file" aria-label="File"><svg class="i16"><use href="#i-file" /></svg><span class="caret"></span></button>
        <button type="button" class="q-save" aria-label="Save"><svg class="i16"><use href="#i-save" /></svg></button>
        <button type="button" class="q-undo" aria-label="Undo"><svg class="i16"><use href="#i-undo" /></svg><span class="caret"></span></button>
        <button type="button" class="q-redo" aria-label="Redo"><svg class="i16"><use href="#i-redo" /></svg><span class="caret"></span></button>
      </div>
      <button type="button" class="home" aria-label="Home"><svg class="i16"><use href="#i-home" /></svg></button>
      <div v-for="tab in docTabs" :key="tab.title" class="doc" :class="{ active: tab.active }">
        <button type="button" class="doc-label"><svg class="i16"><use href="#i-cube" /></svg>{{ tab.title }}</button>
        <button type="button" class="doc-close" aria-label="Close tab"><svg width="12" height="12"><use href="#i-close" /></svg></button>
      </div>
      <button type="button" class="newtab" aria-label="New tab"><svg width="14" height="14" viewBox="0 0 14 14"><path d="M7 1v12M1 7h12" stroke="#7c7c7c" stroke-width="3" /></svg></button>
      <div class="account">
        <button v-for="icon in ['jobs', 'clock', 'bell', 'help']" :key="icon" type="button" :aria-label="icon"><svg class="i16"><use :href="`#i-${icon}`" /></svg></button>
        <button type="button" class="avatar" aria-label="Account"><svg width="24" height="24"><use href="#i-avatar" /></svg></button>
      </div>
    </nav>

    <section class="ribbon">
      <button type="button" class="workspace">DESIGN<span class="caret"></span></button>
      <div class="ribbon-main">
        <div class="ribbon-tabs">
          <button v-for="name in workspaces" :key="name" type="button" :class="{ on: name === activeWorkspace }" @click="activeWorkspace = name">{{ name }}</button>
        </div>
        <div class="groups">
          <div v-for="group in groups" :key="group.label" class="group" :class="{ roomy: group.roomy }">
            <div class="tools">
              <button v-for="icon in group.icons" :key="icon" type="button" class="tool" :class="{ selected: group.selected }" :aria-label="icon"><svg><use :href="`#i-${icon}`" /></svg></button>
            </div>
            <button type="button" class="group-label">{{ group.label }}<span class="caret"></span></button>
          </div>
        </div>
      </div>
    </section>

    <main class="viewport">
      <svg class="scene" viewBox="0 140 1919 842" preserveAspectRatio="xMidYMid meet" role="img" aria-label="Housing model">
        <defs>
          <linearGradient id="m-top" x1="0" y1="0" x2="0" y2="1"><stop offset="0" stop-color="#ce6558" /><stop offset="1" stop-color="#cc5e52" /></linearGradient>
          <linearGradient id="m-bend" gradientUnits="userSpaceOnUse" x1="750" y1="573" x2="738" y2="612"><stop offset="0" stop-color="#cb5b4e" /><stop offset=".2" stop-color="#c54538" /><stop offset=".55" stop-color="#bb3b30" /><stop offset=".8" stop-color="#b2443d" /><stop offset="1" stop-color="#a53831" /></linearGradient>
          <linearGradient id="m-body" gradientUnits="userSpaceOnUse" x1="585" y1="0" x2="960" y2="0"><stop offset="0" stop-color="#b8554e" /><stop offset=".02" stop-color="#a53731" /><stop offset=".55" stop-color="#a33630" /><stop offset=".78" stop-color="#9c342c" /><stop offset=".84" stop-color="#aa382f" /><stop offset=".9" stop-color="#ae3a31" /><stop offset=".93" stop-color="#b4473f" /><stop offset="1" stop-color="#b4473f" /></linearGradient>
          <linearGradient id="m-inner" gradientUnits="userSpaceOnUse" x1="998" y1="694" x2="1009" y2="707"><stop offset="0" stop-color="#7a2a23" /><stop offset=".5" stop-color="#93352e" /><stop offset="1" stop-color="#b4473f" /></linearGradient>
          <linearGradient id="m-nut" x1="0" y1="0" x2="1" y2="1"><stop offset="0" stop-color="#63635b" /><stop offset=".6" stop-color="#8c8c82" /><stop offset="1" stop-color="#55554d" /></linearGradient>
          <linearGradient id="m-shank" x1="0" y1="0" x2="0" y2="1"><stop offset="0" stop-color="#55554e" /><stop offset=".45" stop-color="#8b8b80" /><stop offset="1" stop-color="#3b2b28" /></linearGradient>
          <linearGradient id="c-left" x1="0" y1="0" x2="1" y2="1"><stop offset="0" stop-color="#f2f2f2" /><stop offset="1" stop-color="#d9d9d9" /></linearGradient>
          <radialGradient id="c-shadow"><stop offset="0.5" stop-color="#888" /><stop offset="1" stop-color="#fff" stop-opacity="0" /></radialGradient>
        </defs>

        <!-- sheet metal housing -->
        <path d="M598 524v13l2 4 14-9z" fill="#9b342e" />
        <path d="M585 562Q587 555 595 553L880 648 900 655 1136 578 1146 555 1184 543 1185 590Q1185 594 1180 598L942 793Q934 798 923 800 901 804 883 797L595 708Q590 706 590 702z" fill="url(#m-body)" />
        <path d="M585 562q2-7 10-9l-1 14q-7-1-9-5z" fill="#c25a50" />
        <path d="M1136 573L930 638q-6 2-12 0l-17-4q-9 3-11 12l-1 8q16 5 30-1l218-68z" fill="#fff" />
        <path d="M1350 491v15l-165 53v-16zM1148 553v18l-3 1L930 639q-6 2-12 0l-19-4v-14l18 4q6 1 11 0z" fill="#b4463f" stroke="#b4463f" stroke-width=".5" />
        <path d="M598 523q0-2 5-3l413-130q9-4 20-1l311 99q4 2 3 4L970 612l-42 14q-6 2-11 0l-17-5-290-90-10-4z" fill="url(#m-top)" />
        <path d="M1136 583l11 3-187 60-42 13q-12 3-20 1l-18-2 10-4q16 5 30-1z" fill="#c05950" />
        <path d="M1136 575l11-4v15l-11-3z" fill="#7a2b25" />
        <path d="M612 530l288 91q-12 4-16 15l-4 21-286-91q1-25 18-36z" fill="url(#m-bend)" />
        <path d="M900 621l2 15q-10 3-12 11l-1 7-9 3q1-29 20-36z" fill="#b4473f" stroke="#b4473f" stroke-width=".6" />
        <path d="M1134 553l40-13 10 4-37 12z" fill="#c75f55" stroke="#9a322c" stroke-width=".8" />
        <path d="M1147 556v16M1185 544v14" stroke="#93302a" />
        <path d="M818 453l40-12 11 3-41 13z" fill="#c15a50" /><path d="M818 453l10 4 41-13-11-3" fill="none" stroke="#9a322c" />

        <!-- triangular window in the side wall -->
        <path d="M951 689q0-7 7-9l89-28 9-2q3 3-1 8l-8 8-92 77-3-3z" fill="url(#m-inner)" />
        <path d="M951 689q0-7 7-9l89-28q1 6-6 12l-81 65-9 8z" fill="#fff" />

        <!-- screw holes -->
        <g><ellipse cx="651" cy="618" rx="8" ry="11" transform="rotate(-12 651 618)" fill="#87302a" /><ellipse cx="654" cy="617" rx="4" ry="10" transform="rotate(-14 654 617)" fill="#fff" /><path d="M652 620l6-4q1 8-1 12z" fill="#401512" /></g>
        <g><ellipse cx="653" cy="692" rx="8" ry="11" transform="rotate(-12 653 692)" fill="#87302a" /><ellipse cx="656" cy="691" rx="4" ry="10" transform="rotate(-14 656 691)" fill="#fff" /></g>
        <g><ellipse cx="823" cy="673" rx="8" ry="11" transform="rotate(-12 823 673)" fill="#87302a" /><ellipse cx="826" cy="673" rx="4" ry="10" transform="rotate(-14 826 673)" fill="#fff" /></g>

        <!-- nut and bolt -->
        <path d="M810 740l16-5q6 2 7 10v10l-18 6z" fill="url(#m-shank)" />
        <path d="M816 739l2 19M819 738l2 19M822 737l2 18M825 736l2 18M828 736l2 18" stroke="#3c3c36" stroke-width=".8" />
        <path d="M779 748l5-8 18-5 13 7 1 21-4 7-19 6-12-11z" fill="url(#m-nut)" />
        <path d="M779 748l5-8 14-2 5 14v11l-10 13-12-11z" fill="#595951" />
        <ellipse cx="791" cy="757" rx="8" ry="10" transform="rotate(-10 791 757)" fill="#4c4c45" stroke="#6c6c63" /><ellipse cx="792" cy="757" rx="5" ry="7" fill="#5f5f57" stroke="#8a8a80" stroke-width=".8" />

        <!-- view cube -->
        <ellipse cx="1857" cy="229" rx="46" ry="16" fill="url(#c-shadow)" />
        <path d="M1822 182l35-8 33 6-36 10z" fill="#ececec" /><path d="M1822 182l32 8 2 50-30-15z" fill="url(#c-left)" /><path d="M1854 190l36-10 1 46-35 14z" fill="#dfdfdf" />
        <path d="M1847 187l7 3 7-2v9l-7 2-7-2z" fill="#cfd6de" opacity=".7" />
        <path d="M1822 182l35-8 33 6M1822 182l32 8 36-10M1822 182l4 43 30 15M1854 190l2 50M1890 180v46" fill="none" stroke="#999" stroke-dasharray="7 3" />
        <path d="M1849 181q3-3 5 0 3 1 7 1" fill="none" stroke="#888" stroke-width="1.500" />
        <text class="face" x="1838" y="213" transform="rotate(14 1838 210)">BACK</text>
        <text class="face" x="1873" y="212" transform="rotate(-15 1873 209)">LEFT</text>
        <path d="M1892 172v54" stroke="#7b7bff" stroke-width="2.500" /><path d="M1891 226l-42 19" stroke="#4ee44e" stroke-width="2.500" />
        <text x="1891" y="169" class="axis" fill="#8d8dff">Z</text><text x="1843" y="252" class="axis" fill="#8dff8d">Y</text>
      </svg>

      <aside class="browser">
        <div class="panel-head">
          <button type="button" aria-label="Collapse"><svg width="10" height="8" viewBox="0 0 10 8"><path d="M5 0v8L0 4zM10 0v8L5 4z" fill="#333" /></svg></button>
          <span class="panel-title">BROWSER</span>
          <button type="button" aria-label="Minimize browser"><svg width="10" height="10" viewBox="0 0 10 10"><circle cx="5" cy="5" r="5" fill="#333" /><path d="M2 5h6" stroke="#f1f1f1" stroke-width="1.500" /></svg></button>
        </div>
        <ul class="tree">
          <li v-for="(node, index) in tree" :key="index" :class="`depth-${node.depth}`">
            <button type="button" class="toggle" :aria-label="node.toggle" :disabled="node.toggle === 'none'">
              <svg v-if="node.toggle !== 'none'" width="12" height="14"><use :href="`#i-${node.toggle}`" /></svg>
            </button>
            <div class="node">
              <button v-if="node.eye" type="button" class="eye" aria-label="Visibility"><svg class="i16"><use :href="`#i-eye-${node.eye}`" /></svg></button>
              <span class="name" :class="{ current: node.active, gear: node.icon === 'gear' }">
                <svg class="i16"><use :href="`#i-${node.icon}`" /></svg>{{ node.label }}
              </span>
              <svg v-if="node.active" class="target" width="14" height="14" viewBox="0 0 14 14"><circle cx="7" cy="7" r="6" fill="#fff" stroke="#333" stroke-width="1.200" /><circle cx="7" cy="7" r="2.500" fill="#333" /></svg>
            </div>
          </li>
        </ul>
      </aside>

      <footer class="bottom-row">
        <div class="panel-head comments">
          <span class="panel-title">COMMENTS</span>
          <button type="button" aria-label="Expand comments"><svg width="10" height="10" viewBox="0 0 10 10"><circle cx="5" cy="5" r="5" fill="#333" /><path d="M2 5h6M5 2v6" stroke="#f1f1f1" stroke-width="1.500" /></svg></button>
        </div>
        <div class="navbar">
          <button v-for="item in navTools" :key="item.name" type="button" :class="item.menu" :aria-label="item.name"><svg width="18" height="18"><use :href="`#i-${item.icon}`" /></svg><span v-if="item.menu" class="caret"></span></button>
        </div>
      </footer>
    </main>

    <section class="timeline">
      <div class="playback">
        <button v-for="name in playback" :key="name" type="button" :aria-label="name"><svg class="i16"><use :href="`#i-${name}`" /></svg></button>
      </div>
      <div class="track">
        <div class="features">
          <button v-for="(name, index) in features" :key="index" type="button" class="feature" :class="{ expandable: name === 'tinsert' }" :aria-label="name"><svg class="i16"><use :href="`#i-${name}`" /></svg></button>
        </div>
        <div class="rail"></div>
      </div>
      <svg class="marker" width="12" height="32" viewBox="0 0 12 32"><path d="M0 0h12v5l-5 5v22H5V10L0 5z" fill="#555" /></svg>
      <button type="button" class="settings" aria-label="Timeline settings"><svg class="i16"><use href="#i-gear" /></svg></button>
    </section>

    <footer class="taskbar">
      <div class="apps">
        <button v-for="app in taskApps" :key="app.name" type="button" :class="[app.name, { running: app.running }]" :aria-label="app.name">
          <svg class="app-icon" viewBox="0 0 24 24">
            <use :href="`#a-${app.name}`" />
            <text v-for="glyph in app.glyphs" :key="glyph.text" :x="glyph.x" :y="glyph.y" :font-size="glyph.size" :class="glyph.kind">{{ glyph.text }}</text>
          </svg>
        </button>
      </div>
      <div class="clock"><span>4:59 PM</span><span>7/3/2024</span></div>
    </footer>
  </div>
</template>

<style>
body { margin: 0; }
</style>

<style scoped>
.app { min-height: 100vh; display: flex; flex-direction: column; background: #fff; color: #333; font: 11px/14px "Liberation Sans", Arial, sans-serif; overflow: hidden; }
.defs { position: absolute; width: 0; height: 0; }
button { display: flex; align-items: center; justify-content: center; padding: 0; margin: 0; border: 0; background: none; color: inherit; font: inherit; flex: none; }
svg { display: block; flex: none; }
.i16 { width: 16px; height: 16px; }
.caret { width: 0; height: 0; border: 3px solid transparent; border-top: 4px solid currentColor; border-bottom: 0; }
.logo text, .app-icon text { font-family: "Liberation Sans", Arial, sans-serif; font-weight: bold; fill: #fff; text-anchor: middle; }
.app-icon text.dark { fill: #111; }
.app-icon text.nx { fill: #12577f; stroke: #fff; stroke-width: 2px; paint-order: stroke; }

.titlebar { height: 23px; display: flex; align-items: center; background: #f3f3f3; }
.logo { width: 16px; height: 16px; margin: 0 5px 0 3px; }
.title { color: #8c8c8c; font: 11px/16px "Noto Sans", "Open Sans", sans-serif; }
.window-controls { margin-left: auto; display: flex; height: 20px; }
.window-controls button { width: 46px; }

.docbar { height: 32px; display: flex; align-items: flex-end; gap: 4px; background: #cacaca; }
.quick { width: 191px; height: 32px; box-sizing: border-box; display: flex; align-items: center; padding-left: 8px; color: #5e5e5e; }
.quick .caret { border-width: 5px 4px 0; margin-left: 4px; }
.q-file { margin-left: 17px; }
.q-save { margin-left: 17px; }
.q-undo { margin-left: 17px; }
.q-redo { margin-left: 12px; color: #949494; }
.home { width: 39px; height: 28px; padding: 2px 0 0 2px; border-radius: 4px 4px 0 0; background: #bababa; }
.doc { flex: 1; height: 28px; display: flex; align-items: center; border-radius: 4px 4px 0 0; background: #bababa; color: #6b6b6b; font-size: 12px; }
.doc.active { background: #f1f1f1; color: #333; }
.doc-label { flex: 1; height: 28px; gap: 5px; padding: 2px 0 0 6px; }
.doc-close { width: 12px; height: 12px; margin-right: 5px; color: #777; }
.newtab { width: 28px; height: 28px; border-radius: 4px 4px 0 0; background: #bababa; }
.account { width: 176px; height: 32px; display: flex; align-items: center; gap: 17px; box-sizing: border-box; padding-left: 8px; }
.avatar { margin-left: 2px; }

.ribbon { height: 81px; display: flex; background: #f1f1f1; border-bottom: 1px solid #dadada; box-shadow: 0 3px 0 #f4f4f4; margin-bottom: 3px; }
.workspace { width: 110px; height: 62px; box-sizing: border-box; margin: 10px 6px 0 11px; border: 2px solid #dcdcdc; border-radius: 4px; font-weight: bold; gap: 6px; }
.ribbon-main { flex: 1; display: flex; flex-direction: column; gap: 1px; }
.ribbon-tabs { display: flex; gap: 22px; padding-left: 11px; }
.ribbon-tabs button { height: 23px; box-sizing: border-box; padding: 1px 12px 0; border-bottom: 3px solid transparent; }
.ribbon-tabs .on { color: #0696d7; border-color: #0696d7; }
.groups { display: flex; }
.group { display: flex; flex-direction: column; align-items: center; position: relative; }
.group:not(:last-child) { padding-right: 2px; }
.group:not(:last-child)::after { content: ""; position: absolute; right: 0; top: 2px; bottom: 2px; width: 2px; background: #dcdcdc; }
.tools { display: flex; padding: 0 4px; }
.tool { width: 43px; height: 38px; }
.tool svg { width: 32px; height: 32px; }
.tool.selected { width: 38px; background: #0696d7; }
.tool.selected svg { width: 38px; height: 38px; }
.group-label { height: 18px; padding: 0 12px; gap: 3px; }
.roomy .group-label { padding: 0 15px; }

.viewport { flex: 1; position: relative; display: flex; flex-direction: column; }
.scene { position: absolute; inset: 0; width: 100%; height: 100%; }
.scene .face { font: bold 7px "Liberation Sans", sans-serif; fill: #8a8f99; text-anchor: middle; }
.scene .axis { font: bold 14px "Liberation Sans", sans-serif; text-anchor: middle; }
.browser { position: relative; width: 300px; margin: 4px 0 0 4px; }
.panel-head { width: 300px; height: 25px; box-sizing: border-box; display: flex; align-items: center; padding: 0 10px 1px 5px; border: 1px solid #c8c8c8; background: #f1f1f1; color: #555; }
.panel-title { flex: 1; margin-left: 9px; }
.tree { list-style: none; margin: 5px 0 0; padding: 0; display: flex; flex-direction: column; gap: 4px; }
.tree li { display: flex; align-items: center; height: 20px; }
.depth-0 { padding-left: 17px; }
.depth-1 { padding-left: 35px; }
.depth-2 { padding-left: 53px; }
.depth-3 { padding-left: 71px; }
.toggle { width: 12px; margin-right: 7px; }
.node { max-width: 227px; height: 20px; box-sizing: border-box; display: flex; align-items: center; padding: 0 11px 0 3px; background: #f1f1f1; white-space: nowrap; }
.eye { margin-right: 9px; }
.name { flex: none; display: flex; align-items: center; gap: 14px; height: 16px; }
.name.gear { gap: 12px; }
.name.gear svg { width: 14px; height: 14px; }
.name.current { margin-left: -3px; padding: 0 11px 0 3px; background: #8f8f8f; color: #fff; font-weight: bold; }
.target { margin-left: 3px; }
.bottom-row { position: relative; margin: auto 0 4px; display: flex; align-items: flex-end; padding-left: 4px; }
.comments { border-top: 0; padding-left: 15px; }
.navbar { position: absolute; left: 50%; bottom: 2px; width: 237px; height: 24px; box-sizing: border-box; margin-left: -118px; padding-left: 3px; display: flex; align-items: center; background: #f1f1f1; }
.navbar button { margin-right: 8px; }
.navbar .far, .navbar .near { margin-right: 5px; }
.navbar .far { gap: 4px; }
.navbar .near { gap: 1px; }

.timeline { height: 50px; box-sizing: border-box; display: flex; align-items: flex-start; border-top: 1px solid #d6d6d6; background: #f1f1f1; }
.playback { display: flex; gap: 9px; width: 142px; box-sizing: border-box; padding: 16px 0 0 9px; }
.track { padding-top: 15px; }
.features { display: flex; }
.feature { position: relative; width: 24px; height: 24px; align-items: flex-start; }
.feature::after { content: ""; position: absolute; left: 12px; bottom: 0; width: 2px; height: 5px; background: #c8c8c8; }
.feature.expandable::after { content: "+"; left: 6px; bottom: -5px; z-index: 1; width: 10px; height: 10px; background: #777; color: #fff; font: bold 11px/10px "Liberation Sans", sans-serif; }
.rail { height: 2px; margin: 0 10px 0 5px; background: #c8c8c8; }
.marker { margin: 9px 0 0 -6px; }
.settings { margin: 16px 13px 0 auto; }

.taskbar { height: 47px; box-sizing: border-box; display: flex; align-items: center; justify-content: space-between; border-top: 1px solid #b9bb86; background: linear-gradient(90deg, #e4ee91, #ecee85 12%, #efe9a0 19%, #e9ee90 26%, #e4ee9b 36%, #e9ee8e 45%, #f0ed88 54%, #efe8a0 59%, #f0ee88 64%, #e6ef8f 82%, #f1f088 90%, #f0ec9c 94%, #eff083 97%, #eaf08c); }
.apps { display: flex; gap: 6px; padding-left: 14px; }
.apps button { position: relative; width: 38px; height: 38px; border-radius: 4px; }
.app-icon { width: 24px; height: 24px; overflow: visible; }
.apps .teams { background: #f7f5c4; }
.apps .running::after { content: ""; position: absolute; left: 16px; bottom: 0; width: 6px; height: 3px; border-radius: 2px; background: #85865c; }
.apps .teams::after { left: 11px; width: 16px; background: #0a78d4; }
.clock { display: flex; flex-direction: column; align-items: flex-end; padding-right: 22px; color: #4c4c30; font: 12px/16px "Open Sans", "Noto Sans", sans-serif; }
</style>
